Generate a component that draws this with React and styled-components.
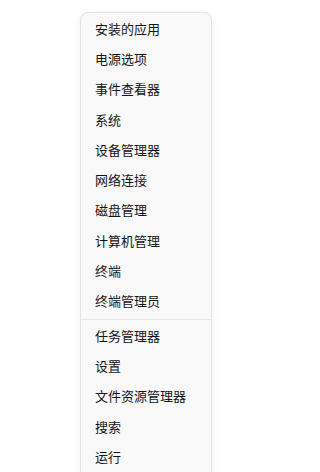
import React from "react";
import styled, { createGlobalStyle } from "styled-components";

const GlobalStyle = createGlobalStyle`
  html, body {
    margin: 0;
    padding: 0;
    background: #ffffff;
    overflow: hidden;
  }
`;

const Page = styled.div`
  width: 223px;
  height: 472px;
  padding: 12px 0 0 80px;
  box-sizing: border-box;
  overflow: hidden;
`;

const Menu = styled.div`
  width: 132px;
  box-sizing: border-box;
  padding: 0 0 8px;
  background: #f9f9f9;
  border: 1px solid #e3e3e3;
  border-radius: 8px;
  box-shadow: 0 2px 8px rgba(0, 0, 0, 0.06);
  font-family: "Noto Sans CJK SC", "Noto Sans", sans-serif;
`;

const Item = styled.div`
  height: 30.3px;
  display: flex;
  align-items: center;
  padding-left: 14px;
  font-size: 13px;
  color: #141414;
  white-space: nowrap;
`;

const Separator = styled.div`
  height: 1px;
  margin: 3px 0 0;
  background: #e6e6e6;
`;

const groups = [
  [
    "安装的应用",
    "电源选项",
    "事件查看器",
    "系统",
    "设备管理器",
    "网络连接",
    "磁盘管理",
    "计算机管理",
    "终端",
    "终端管理员",
  ],
  ["任务管理器", "设置", "文件资源管理器", "搜索", "运行"],
];

export default function App() {
  return (
    <>
      <GlobalStyle />
      <Page>
        <Menu>
          {groups.map((group, i) => (
            <React.Fragment key={i}>
              {i > 0 && <Separator />}
              {group.map((label) => (
                <Item key={label}>{label}</Item>
              ))}
            </React.Fragment>
          ))}
        </Menu>
      </Page>
    </>
  );
}
